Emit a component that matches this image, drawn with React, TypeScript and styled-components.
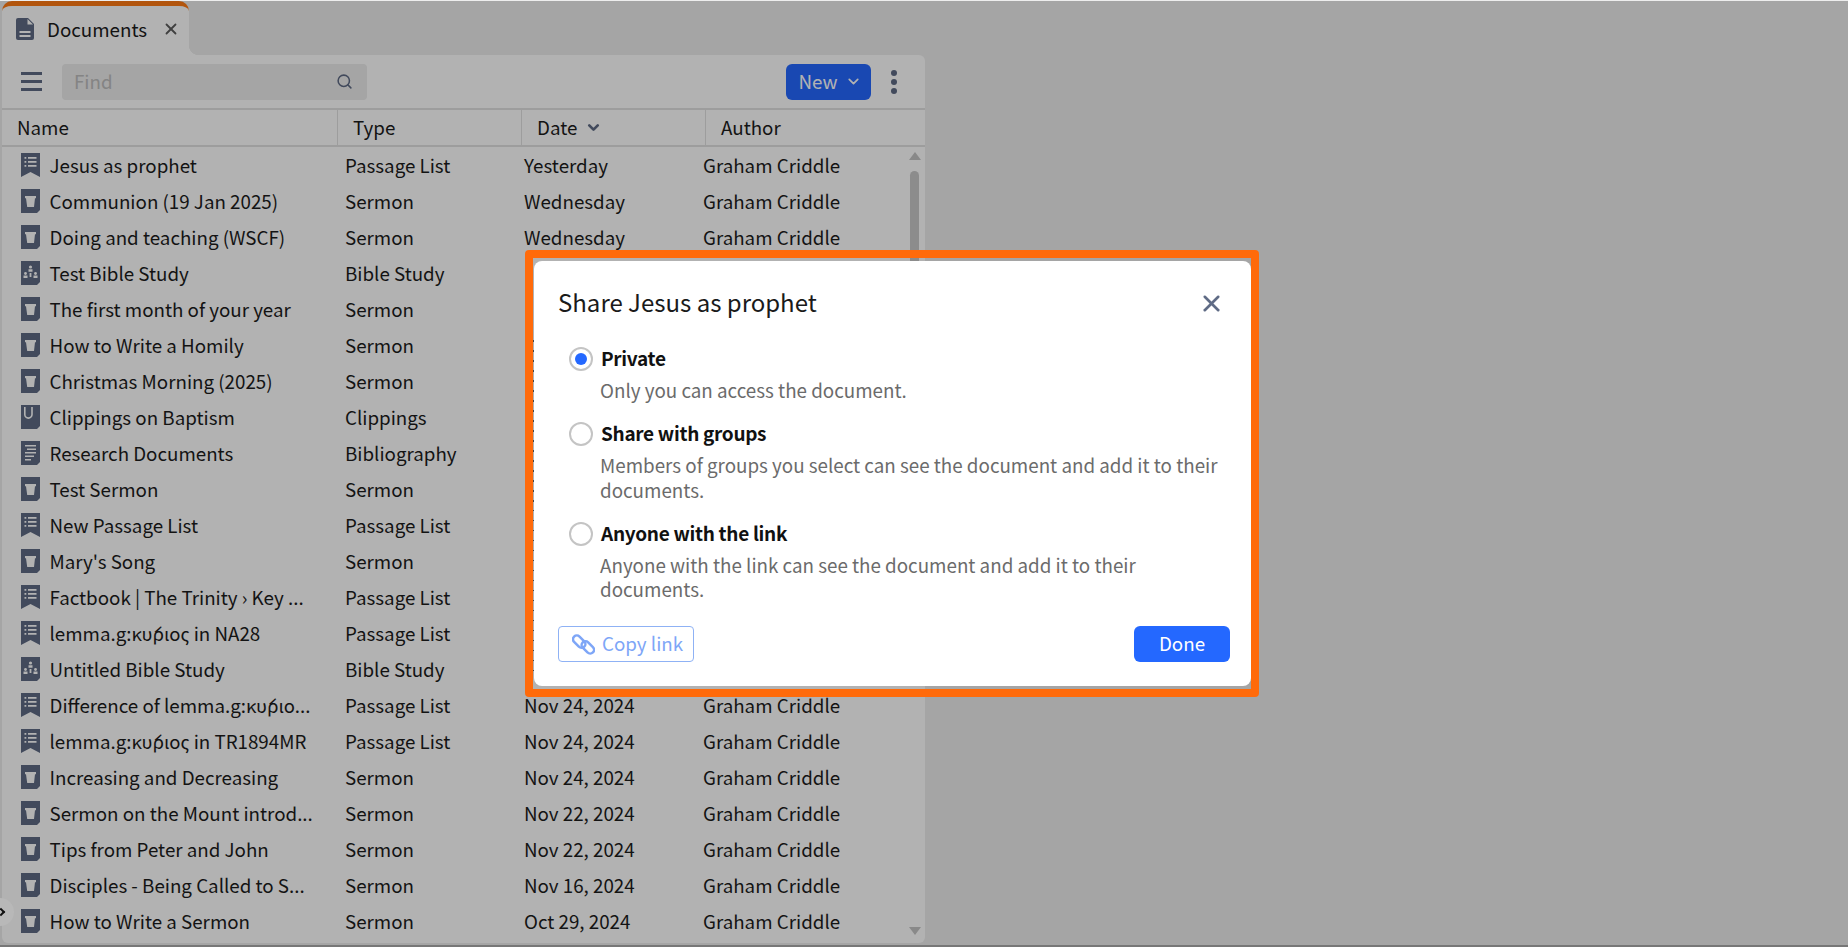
import { createGlobalStyle, styled } from "styled-components";
import { Search, X, ChevronDown } from "lucide-react";

const GlobalStyle = createGlobalStyle`
  html, body, #root {
    margin: 0;
    height: 100%;
  }
  body {
    background: #ededed;
    overflow: hidden;
    font-family: "Noto Sans CJK SC", "Noto Sans", sans-serif;
    color: #1c1c1c;
  }
`;

type Kind = "list" | "sermon" | "study" | "clip" | "biblio";

const rows: { name: string; type: string; date: string; author: string; kind: Kind }[] = [
  { name: "Jesus as prophet", type: "Passage List", date: "Yesterday", author: "Graham Criddle", kind: "list" },
  { name: "Communion (19 Jan 2025)", type: "Sermon", date: "Wednesday", author: "Graham Criddle", kind: "sermon" },
  { name: "Doing and teaching (WSCF)", type: "Sermon", date: "Wednesday", author: "Graham Criddle", kind: "sermon" },
  { name: "Test Bible Study", type: "Bible Study", date: "", author: "", kind: "study" },
  { name: "The first month of your year", type: "Sermon", date: "", author: "", kind: "sermon" },
  { name: "How to Write a Homily", type: "Sermon", date: "", author: "", kind: "sermon" },
  { name: "Christmas Morning (2025)", type: "Sermon", date: "", author: "", kind: "sermon" },
  { name: "Clippings on Baptism", type: "Clippings", date: "", author: "", kind: "clip" },
  { name: "Research Documents", type: "Bibliography", date: "", author: "", kind: "biblio" },
  { name: "Test Sermon", type: "Sermon", date: "", author: "", kind: "sermon" },
  { name: "New Passage List", type: "Passage List", date: "", author: "", kind: "list" },
  { name: "Mary's Song", type: "Sermon", date: "", author: "", kind: "sermon" },
  { name: "Factbook | The Trinity › Key ...", type: "Passage List", date: "", author: "", kind: "list" },
  { name: "lemma.g:κ\u03CDριος in NA28", type: "Passage List", date: "", author: "", kind: "list" },
  { name: "Untitled Bible Study", type: "Bible Study", date: "", author: "", kind: "study" },
  { name: "Difference of lemma.g:κ\u03CDριο...", type: "Passage List", date: "Nov 24, 2024", author: "Graham Criddle", kind: "list" },
  { name: "lemma.g:κ\u03CDριος in TR1894MR", type: "Passage List", date: "Nov 24, 2024", author: "Graham Criddle", kind: "list" },
  { name: "Increasing and Decreasing", type: "Sermon", date: "Nov 24, 2024", author: "Graham Criddle", kind: "sermon" },
  { name: "Sermon on the Mount introd...", type: "Sermon", date: "Nov 22, 2024", author: "Graham Criddle", kind: "sermon" },
  { name: "Tips from Peter and John", type: "Sermon", date: "Nov 22, 2024", author: "Graham Criddle", kind: "sermon" },
  { name: "Disciples - Being Called to S...", type: "Sermon", date: "Nov 16, 2024", author: "Graham Criddle", kind: "sermon" },
  { name: "How to Write a Sermon", type: "Sermon", date: "Oct 29, 2024", author: "Graham Criddle", kind: "sermon" },
];

const BOOK = "M0 0h19v21l-3 3H0z";

// the glyph punched out of each book shape
const DocIcon = ({ kind }: { kind: Kind }) => (
  <RowIcon viewBox="0 0 19 24" aria-hidden>
    {kind === "list" ? (
      <>
        <path d="M0 0h19v24l-9.5-5L0 24z" fill="#5f6b85" />
        <path
          d="M3.5 4h1.8v1.8H3.5zM7 4h8.5v1.8H7zM3.5 8h1.8v1.8H3.5zM7 8h8.5v1.8H7zM3.5 12h1.8v1.8H3.5zM7 12h8.5v1.8H7z"
          fill="#fff"
        />
      </>
    ) : (
      <>
        <path d={BOOK} fill="#5f6b85" />
        {kind === "sermon" && <path d="M4 7h11v2.2h-1L13 18H6.2L5 9.2H4z" fill="#fff" />}
        {kind === "study" && (
          <>
            <circle cx="9.5" cy="6" r="1.6" fill="#fff" />
            <circle cx="4.5" cy="12.5" r="1.4" fill="#fff" />
            <circle cx="14.5" cy="12.5" r="1.4" fill="#fff" />
            <path d="M7.5 8.2h4v2.6h-4zM2.5 14.5h4v2.5h-4zM12.5 14.5h4v2.5h-4zM8.6 12h1.8v4H8.6z" fill="#fff" />
          </>
        )}
        {kind === "clip" && <path d="M3.8 2v7.5a3.6 3.6 0 0 0 7.2 0V2" fill="none" stroke="#fff" strokeWidth="1.6" />}
        {kind === "biblio" && (
          <path d="M4 4h11v1.5H4zM6 7.5h9v1.5H6zM4 11h11v1.5H4zM4 14.5h9v1.5H4zM4 18h6v1.5H4z" fill="#fff" />
        )}
      </>
    )}
  </RowIcon>
);

export default function App() {
  return (
    <>
      <GlobalStyle />
      <Page>
        <TabStrip>
          <Tab>
            <TabIcon viewBox="0 0 18 22" aria-hidden>
              <path d="M2 0h10l6 6v14a2 2 0 0 1-2 2H2a2 2 0 0 1-2-2V2a2 2 0 0 1 2-2z" fill="#5f6b85" />
              <path d="M11.5 1v5.5H17zM3.5 13h11v2h-11zM3.5 17h11v2h-11z" fill="#fff" />
            </TabIcon>
            <TabTitle>Documents</TabTitle>
            <TabClose>
              <X size={18} strokeWidth={2.4} />
            </TabClose>
          </Tab>
        </TabStrip>

        <Panel>
          <Toolbar>
            <Burger aria-hidden>
              <span />
              <span />
              <span />
            </Burger>
            <FindBox>
              <FindText>Find</FindText>
              <Search size={17} strokeWidth={2.2} color="#5f6b85" />
            </FindBox>
            <Spacer />
            <NewButton>
              New
              <ChevronDown size={17} strokeWidth={2.4} />
            </NewButton>
            <Kebab aria-hidden>
              <span />
              <span />
              <span />
            </Kebab>
          </Toolbar>

          <HeaderRow>
            <HeaderCell>Name</HeaderCell>
            <HeaderCell>Type</HeaderCell>
            <HeaderCell>
              Date
              <ChevronDown size={17} strokeWidth={3.8} color="#5f6b85" />
            </HeaderCell>
            <HeaderCell>Author</HeaderCell>
          </HeaderRow>

          <Body>
            <List>
              {rows.map((r) => (
                <Row key={r.name}>
                  <NameCell>
                    <DocIcon kind={r.kind} />
                    <CellText>{r.name}</CellText>
                  </NameCell>
                  <CellText>{r.type}</CellText>
                  <CellText>{r.date}</CellText>
                  <CellText>{r.author}</CellText>
                </Row>
              ))}
            </List>
            <ScrollBar>
              <ArrowUp />
              <Thumb />
              <ArrowDown />
            </ScrollBar>
          </Body>
        </Panel>

        <Overlay>
          <EdgeButton>
            <EdgeChevron />
          </EdgeButton>
          <Highlight>
            <Dialog>
              <DialogHead>
                <DialogTitle>Share Jesus as prophet</DialogTitle>
                <CloseButton>
                  <X size={27} strokeWidth={2.3} />
                </CloseButton>
              </DialogHead>

              <Options>
                <Option>
                  <Radio $checked />
                  <OptionLabel>Private</OptionLabel>
                  <OptionText>Only you can access the document.</OptionText>
                </Option>
                <Option>
                  <Radio />
                  <OptionLabel>Share with groups</OptionLabel>
                  <OptionText>
                    Members of groups you select can see the document and add it to their documents.
                  </OptionText>
                </Option>
                <Option>
                  <Radio />
                  <OptionLabel>Anyone with the link</OptionLabel>
                  <OptionText>
                    Anyone with the link can see the document and add it to their documents.
                  </OptionText>
                </Option>
              </Options>

              <DialogFoot>
                <CopyButton>
                  <LinkIcon viewBox="0 0 24 24" aria-hidden>
                    <rect x="0" y="5" width="15" height="8" rx="4" transform="rotate(45 7.5 9)" />
                    <rect x="9" y="11" width="15" height="8" rx="4" transform="rotate(45 16.5 15)" />
                  </LinkIcon>
                  Copy link
                </CopyButton>
                <DoneButton>Done</DoneButton>
              </DialogFoot>
            </Dialog>
          </Highlight>
        </Overlay>
      </Page>
    </>
  );
}

const Page = styled.div`
  position: relative;
  height: 947px;
  padding: 1px 0 0 2px;
  box-sizing: border-box;
  overflow: hidden;
  border-bottom: 2px solid #777;
`;

const TabStrip = styled.div`
  display: flex;
  height: 54px;
`;

const Tab = styled.div`
  display: flex;
  align-items: center;
  width: 187px;
  box-sizing: border-box;
  padding: 0 9px 4px 14px;
  background: #fff;
  border-top: 5px solid #ff7a14;
  border-radius: 10px 10px 0 0;
  position: relative;
  &::after {
    content: "";
    position: absolute;
    left: 100%;
    bottom: 0;
    width: 10px;
    height: 10px;
    background: radial-gradient(circle at 100% 0, #ededed 10px, #fff 10.5px);
  }
`;

const TabIcon = styled.svg`
  width: 18px;
  height: 22px;
  flex: none;
`;

const TabTitle = styled.span`
  margin-left: 13px;
  font-size: 18.75px;
  line-height: 26px;
  flex: 1;
`;

const TabClose = styled.span`
  display: flex;
  color: #5c5c5c;
`;

const Panel = styled.div`
  width: 923px;
  height: 888px;
  background: #fff;
  border-radius: 0 6px 6px 6px;
  overflow: hidden;
`;

const Toolbar = styled.div`
  display: flex;
  align-items: center;
  height: 53px;
  padding: 0 28px 0 19px;
  border-bottom: 2px solid #e1e1e1;
`;

const Burger = styled.div`
  display: flex;
  flex-direction: column;
  gap: 5px;
  width: 21px;
  span {
    height: 3px;
    background: #5f6b85;
  }
`;

const FindBox = styled.div`
  display: flex;
  align-items: center;
  justify-content: space-between;
  width: 305px;
  height: 36px;
  margin-left: 20px;
  padding: 0 14px 0 12px;
  box-sizing: border-box;
  background: #ececec;
  border-radius: 4px;
`;

const FindText = styled.span`
  font-size: 18.75px;
  line-height: 26px;
  margin-top: -2px;
  color: #bdbdbd;
`;

const Spacer = styled.div`
  flex: 1;
`;

const NewButton = styled.div`
  display: flex;
  align-items: center;
  justify-content: center;
  gap: 7px;
  width: 85px;
  height: 36px;
  padding: 0 0 3px 3px;
  box-sizing: border-box;
  background: #2468ff;
  color: #fff;
  font-size: 18.75px;
  border-radius: 6px;
  svg {
    margin-top: 2px;
  }
`;

const Kebab = styled.div`
  display: flex;
  flex-direction: column;
  gap: 3px;
  margin-left: 20px;
  span {
    width: 6px;
    height: 6px;
    border-radius: 50%;
    background: #5f6b85;
  }
`;

const HeaderRow = styled.div`
  display: grid;
  grid-template-columns: 335px 184px 184px 1fr;
  height: 35px;
  border-bottom: 2px solid #e1e1e1;
`;

const HeaderCell = styled.div`
  display: flex;
  align-items: center;
  gap: 8px;
  padding: 0 0 3px 15px;
  font-size: 18.75px;
  & + & {
    border-left: 1.5px solid #e1e1e1;
  }
  svg {
    margin-top: 3px;
  }
`;

const Body = styled.div`
  display: flex;
  padding-top: 1px;
`;

const List = styled.div`
  flex: 1;
`;

const Row = styled.div`
  display: grid;
  grid-template-columns: 343px 179px 179px 1fr;
  align-items: center;
  height: 36px;
  font-size: 18.75px;
  white-space: nowrap;
`;

const CellText = styled.span`
  line-height: 26px;
  position: relative;
  top: -1px;
`;

const NameCell = styled.div`
  display: flex;
  align-items: center;
  gap: 9.5px;
  padding-left: 19px;
`;

const RowIcon = styled.svg`
  width: 19px;
  height: 24px;
  flex: none;
  margin-top: -2px;
`;

const ScrollBar = styled.div`
  position: relative;
  width: 15px;
  margin-right: 3px;
  display: flex;
  flex-direction: column;
  align-items: center;
`;

const ArrowUp = styled.div`
  margin-top: 4px;
  border: 6px solid transparent;
  border-top: 0;
  border-bottom: 8px solid #c4c4c4;
`;

const Thumb = styled.div`
  width: 9px;
  height: 300px;
  margin-top: 11px;
  border-radius: 5px;
  background: #c9c9c9;
`;

const ArrowDown = styled.div`
  margin-top: auto;
  margin-bottom: 5px;
  border: 6px solid transparent;
  border-bottom: 0;
  border-top: 8px solid #c4c4c4;
`;

const Overlay = styled.div`
  position: absolute;
  inset: 1px 0 0 0;
  background: rgba(0, 0, 0, 0.3);
  display: flex;
  align-items: flex-start;
  justify-content: center;
`;

const EdgeButton = styled.div`
  position: absolute;
  left: -14px;
  bottom: 19px;
  width: 28px;
  height: 28px;
  border-radius: 50%;
  background: #b8b8b8;
  display: flex;
  align-items: center;
  justify-content: flex-end;
`;

const EdgeChevron = styled.span`
  width: 4px;
  height: 4px;
  margin-right: 10px;
  border: solid #111;
  border-width: 2px 2px 0 0;
  transform: rotate(45deg);
`;

const Highlight = styled.div`
  margin: 249px 64px 0 0;
  width: 734px;
  height: 447px;
  box-sizing: border-box;
  border: 8px solid #ff6a0a;
  border-radius: 4px;
  padding: 3px 0 3px 1px;
`;

const Dialog = styled.div`
  position: relative;
  height: 425px;
  background: #fff;
  border-radius: 8px;
  box-sizing: border-box;
  padding: 20px 21px 24px 24px;
  display: flex;
  flex-direction: column;
  &::before {
    content: "";
    position: absolute;
    left: -1px;
    top: 79px;
    bottom: 8px;
    width: 1px;
    background: repeating-linear-gradient(to bottom, #444 0 1.5px, transparent 1.5px 10px);
  }
`;

const DialogHead = styled.div`
  display: flex;
  align-items: center;
  justify-content: space-between;
  height: 44px;
`;

const DialogTitle = styled.div`
  font-size: 24px;
  line-height: 32px;
  margin-top: -2px;
  color: #1a1a1a;
`;

const CloseButton = styled.div`
  display: flex;
  margin-right: 5px;
  color: #5f6b85;
`;

const Options = styled.div`
  display: flex;
  flex-direction: column;
  gap: 17.5px;
  margin-top: 20px;
  padding-left: 11px;
`;

const Option = styled.div`
  display: grid;
  grid-template-columns: 24px 1fr;
  column-gap: 8px;
  align-items: center;
`;

const Radio = styled.span<{ $checked?: boolean }>`
  width: 24px;
  height: 24px;
  margin-top: 2px;
  box-sizing: border-box;
  border-radius: 50%;
  border: 2px solid #c4c4c4;
  background: #fff;
  display: flex;
  align-items: center;
  justify-content: center;
  &::after {
    content: "";
    display: ${(p) => (p.$checked ? "block" : "none")};
    width: 12px;
    height: 12px;
    border-radius: 50%;
    background: #2468ff;
  }
`;

const OptionLabel = styled.div`
  font-size: 19px;
  font-weight: 700;
  letter-spacing: -0.3px;
  line-height: 26px;
  color: #111;
`;

const OptionText = styled.div`
  grid-column: 2;
  margin: 7px 0 0 -1px;
  font-size: 18.8px;
  line-height: 24.5px;
  color: #6b6b6b;
`;

const DialogFoot = styled.div`
  display: flex;
  justify-content: space-between;
  margin-top: auto;
`;

const CopyButton = styled.div`
  display: flex;
  align-items: center;
  gap: 7px;
  width: 136px;
  height: 36px;
  box-sizing: border-box;
  padding: 0 0 3px 13px;
  border: 1px solid #8fb2f5;
  border-radius: 4px;
  color: #7ea6f7;
  font-size: 18.75px;
`;

const LinkIcon = styled.svg`
  width: 23px;
  height: 23px;
  flex: none;
  margin-top: 3px;
  fill: none;
  stroke: #7ea6f7;
  stroke-width: 2.6;
`;

const DoneButton = styled.div`
  display: flex;
  align-items: center;
  justify-content: center;
  width: 96px;
  height: 36px;
  padding-bottom: 3px;
  box-sizing: border-box;
  background: #2468ff;
  color: #fff;
  font-size: 18.75px;
  border-radius: 6px;
`;
